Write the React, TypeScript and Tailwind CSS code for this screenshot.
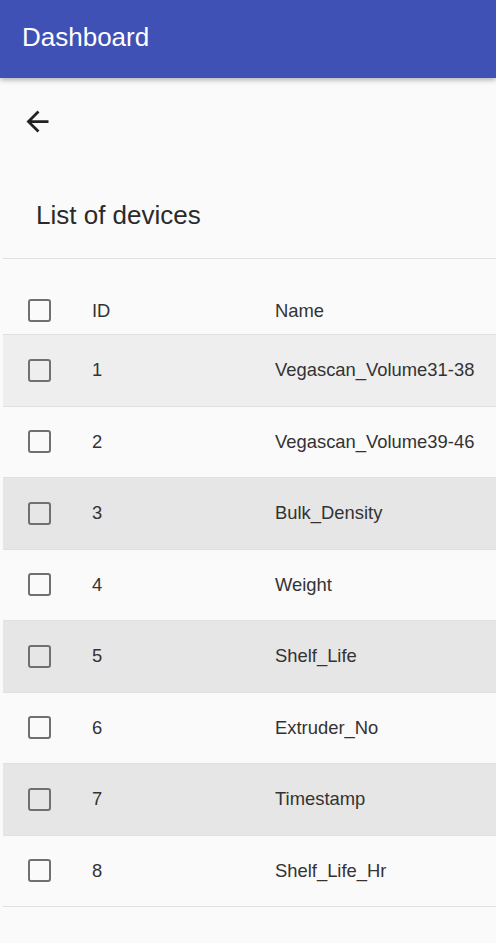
import React from "react";

type Device = {
  id: number;
  name: string;
};

const devices: Device[] = [
  { id: 1, name: "Vegascan_Volume31-38" },
  { id: 2, name: "Vegascan_Volume39-46" },
  { id: 3, name: "Bulk_Density" },
  { id: 4, name: "Weight" },
  { id: 5, name: "Shelf_Life" },
  { id: 6, name: "Extruder_No" },
  { id: 7, name: "Timestamp" },
  { id: 8, name: "Shelf_Life_Hr" },
];

const Checkbox = () => (
  <span className="block h-[23px] w-[23px] rounded-[3px] border-[2.5px] border-[#707070]" />
);

const BackArrow = () => (
  <svg viewBox="0 0 24 24" className="h-[33px] w-[33px] fill-[#222]">
    <path d="M20 11H7.83l5.59-5.59L12 4l-8 8 8 8 1.41-1.41L7.83 13H20v-2z" />
  </svg>
);

export default function App() {
  return (
    <div className="min-h-[943px] bg-[#fafafa] font-['Liberation_Sans',Arial,sans-serif] text-[#333]">
      {/* App bar */}
      <header className="relative z-10 flex h-[78px] items-center bg-[#3f51b5] px-[22px] shadow-[0_2px_5px_rgba(0,0,0,0.3)]">
        <h1 className="pb-[5px] text-[26px] leading-none text-white">Dashboard</h1>
      </header>

      {/* Back button */}
      <div className="flex h-[86px] items-center pl-[21px] pt-[1px]">
        <BackArrow />
      </div>

      {/* Title */}
      <div className="flex h-[94px] items-center pl-[36px] pt-[8px]">
        <h2 className="text-[26px] leading-none text-[#2a2a2a]">List of devices</h2>
      </div>

      {/* Table */}
      <div className="ml-[3px] border-t border-[#e0e0e0]">
        <div className="flex h-[76px] items-end border-b border-[#e0e0e0] pb-[12px] text-[18.4px]">
          <div className="w-[89px] pl-[25px]">
            <Checkbox />
          </div>
          <div className="flex h-[23px] w-[183px] items-center">ID</div>
          <div className="flex h-[23px] items-center">Name</div>
        </div>
        {devices.map((d, i) => (
          <div
            key={d.id}
            className={`flex h-[71.5px] items-center border-b border-[#e0e0e0] text-[18.4px] ${
              i === 0 ? "bg-[#eeeeee]" : i % 2 === 0 ? "bg-[#e6e6e6]" : "bg-[#fafafa]"
            }`}
          >
            <div className="w-[89px] pl-[25px]">
              <Checkbox />
            </div>
            <div className="w-[183px]">{d.id}</div>
            <div>{d.name}</div>
          </div>
        ))}
      </div>
    </div>
  );
}
